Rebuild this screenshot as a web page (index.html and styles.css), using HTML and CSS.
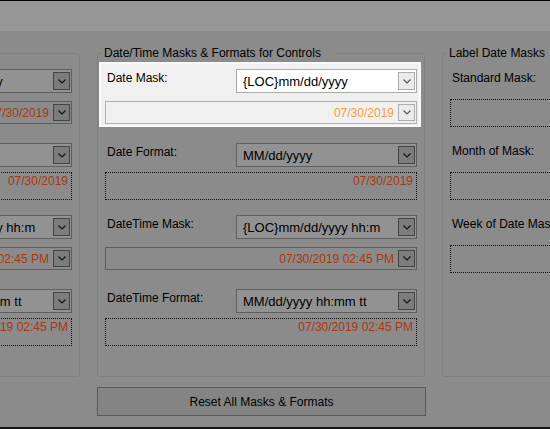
FILE: index.html
```html
<!DOCTYPE html>
<html lang="en">
<head>
<meta charset="utf-8">
<title>Date Masks</title>
<link rel="stylesheet" href="styles.css">
</head>
<body>
<div class="window">
  <div class="topbar"></div>
  <div class="groups">
    <div class="group">
      <span class="title">Date/Time Masks &amp; Formats for Editors</span>
      <div class="sec s1">
        <div class="row"><span class="lbl">Date Mask:</span><div class="combo"><span class="val">{LOC}mm/dd/yyyy</span><span class="btn"><svg viewBox="0 0 8 5"><polyline points="0.5,0.5 4,4 7.5,0.5"/></svg></span></div></div>
        <div class="ro"><span class="out">07/30/2019</span><span class="btn"><svg viewBox="0 0 8 5"><polyline points="0.5,0.5 4,4 7.5,0.5"/></svg></span></div>
      </div>
      <div class="sec s2">
        <div class="row"><span class="lbl">Date Format:</span><div class="combo"><span class="val">MM/dd/yyyy</span><span class="btn"><svg viewBox="0 0 8 5"><polyline points="0.5,0.5 4,4 7.5,0.5"/></svg></span></div></div>
        <div class="dot">07/30/2019</div>
      </div>
      <div class="sec s3">
        <div class="row"><span class="lbl">DateTime Mask:</span><div class="combo"><span class="val">{LOC}mm/dd/yyyy hh:m</span><span class="btn"><svg viewBox="0 0 8 5"><polyline points="0.5,0.5 4,4 7.5,0.5"/></svg></span></div></div>
        <div class="ro"><span class="out">07/30/2019 02:45 PM</span><span class="btn"><svg viewBox="0 0 8 5"><polyline points="0.5,0.5 4,4 7.5,0.5"/></svg></span></div>
      </div>
      <div class="sec s4">
        <div class="row"><span class="lbl">DateTime Format:</span><div class="combo"><span class="val">MM/dd/yyyy hh:mm tt</span><span class="btn"><svg viewBox="0 0 8 5"><polyline points="0.5,0.5 4,4 7.5,0.5"/></svg></span></div></div>
        <div class="dot">07/30/2019 02:45 PM</div>
      </div>
    </div>

    <div class="group">
      <span class="title">Date/Time Masks &amp; Formats for Controls</span>
      <div class="sec s1 spot">
        <div class="row"><span class="lbl">Date Mask:</span><div class="combo"><span class="val">{LOC}mm/dd/yyyy</span><span class="btn"><svg viewBox="0 0 8 5"><polyline points="0.5,0.5 4,4 7.5,0.5"/></svg></span></div></div>
        <div class="ro"><span class="out">07/30/2019</span><span class="btn"><svg viewBox="0 0 8 5"><polyline points="0.5,0.5 4,4 7.5,0.5"/></svg></span></div>
      </div>
      <div class="sec s2">
        <div class="row"><span class="lbl">Date Format:</span><div class="combo"><span class="val">MM/dd/yyyy</span><span class="btn"><svg viewBox="0 0 8 5"><polyline points="0.5,0.5 4,4 7.5,0.5"/></svg></span></div></div>
        <div class="dot">07/30/2019</div>
      </div>
      <div class="sec s3">
        <div class="row"><span class="lbl">DateTime Mask:</span><div class="combo"><span class="val">{LOC}mm/dd/yyyy hh:m</span><span class="btn"><svg viewBox="0 0 8 5"><polyline points="0.5,0.5 4,4 7.5,0.5"/></svg></span></div></div>
        <div class="ro"><span class="out">07/30/2019 02:45 PM</span><span class="btn"><svg viewBox="0 0 8 5"><polyline points="0.5,0.5 4,4 7.5,0.5"/></svg></span></div>
      </div>
      <div class="sec s4">
        <div class="row"><span class="lbl">DateTime Format:</span><div class="combo"><span class="val">MM/dd/yyyy hh:mm tt</span><span class="btn"><svg viewBox="0 0 8 5"><polyline points="0.5,0.5 4,4 7.5,0.5"/></svg></span></div></div>
        <div class="dot">07/30/2019 02:45 PM</div>
      </div>
    </div>

    <div class="group labels">
      <span class="title">Label Date Masks</span>
      <span class="lab first">Standard Mask:</span>
      <div class="dot"></div>
      <span class="lab">Month of Mask:</span>
      <div class="dot"></div>
      <span class="lab">Week of Date Mask:</span>
      <div class="dot"></div>
    </div>

    <button class="reset" type="button">Reset All Masks &amp; Formats</button>
  </div>
</div>
</body>
</html>
```

FILE: styles.css
```css
* { box-sizing: border-box; }

html, body {
  margin: 0;
  padding: 0;
}

body {
  font-family: "Liberation Sans", Arial, sans-serif;
  font-size: 12px;
  color: #000;
  background: #8b8b8b;
}

.window {
  width: 550px;
  height: 429px;
  overflow: hidden;
  background: #8b8b8b;
  border-top: 1px solid #000;
  border-bottom: 2px solid #161616;
}

.topbar {
  height: 30px;
  background: #979797;
}

.groups {
  display: grid;
  grid-template-columns: repeat(3, 328px);
  column-gap: 17px;
  row-gap: 10px;
  margin: 22px 0 0 -248px;
}

.group {
  height: 324px;
  border: 1px solid #7b8089;
  border-radius: 3px;
  padding: 0 7px;
  display: flex;
  flex-direction: column;
}

.title {
  align-self: flex-start;
  margin: -8px 0 0 -3px;
  padding: 0 14px 0 2px;
  line-height: 14px;
  background: #8b8b8b;
  white-space: nowrap;
}

.s1 { margin-top: 9px; }
.s2 { margin-top: 19px; }
.s3 { margin-top: 15px; }
.s4 { margin-top: 19px; }

.row {
  display: flex;
  align-items: flex-start;
}

.lbl {
  padding: 2px 0 0 2px;
  line-height: 14px;
  white-space: nowrap;
}

.combo {
  margin-left: auto;
  width: 181px;
  height: 24px;
  border: 1px solid #5e5e5e;
  background: #929292;
  padding: 2px 1px 2px 2px;
  display: flex;
  align-items: center;
}

.val {
  flex: 1;
  min-width: 0;
  overflow: hidden;
  white-space: nowrap;
  font-size: 13px;
  padding-left: 4px;
}

.btn {
  flex: none;
  width: 17px;
  height: 18px;
  border: 1px solid #444;
  background: #7c7c7c;
  display: flex;
  align-items: center;
  justify-content: center;
}

.btn svg {
  width: 8px;
  height: 5px;
  display: block;
}

.btn polyline {
  fill: none;
  stroke: #111;
  stroke-width: 1.1;
}

.ro {
  margin-top: 8px;
  height: 23px;
  border: 1px solid #5e5e5e;
  padding: 2px 1px 2px 2px;
  display: flex;
  align-items: center;
}

.ro .btn { height: 17px; }

.out {
  flex: 1;
  min-width: 0;
  text-align: right;
  padding-right: 4px;
  color: #a8380f;
  white-space: nowrap;
  overflow: hidden;
}

.dot {
  margin-top: 5px;
  height: 28px;
  border: 1px dotted #111;
  padding: 1px 3px 0 0;
  text-align: right;
  line-height: 14px;
  color: #a8380f;
  white-space: nowrap;
}

/* highlighted (spotlit) section */
.sec.spot {
  margin: 2px -4px -3px -6px;
  padding: 7px 4px 3px 6px;
  background: #f0f0f0;
  box-shadow: inset 0 0 0 2px #f9f9f9;
}

.spot .combo {
  background: #fff;
  border-color: #a9a9a9;
}

.spot .btn {
  background: #ebebeb;
  border-color: #adadad;
}

.spot .btn polyline { stroke: #555; }

.spot .ro {
  background: #f0f0f0;
  border-color: #b0b0b0;
}

.spot .out { color: #f49b42; }

/* label masks group */
.lab {
  padding-left: 2px;
  line-height: 14px;
  margin-top: 17px;
  white-space: nowrap;
}

.lab.first { margin-top: 11px; }

.labels .dot { margin-top: 14px; }

.reset {
  grid-column: 2;
  width: 329px;
  height: 29px;
  margin: 0;
  padding: 0;
  border: 1px solid #595959;
  background: #848484;
  font: inherit;
  color: #000;
}
```
